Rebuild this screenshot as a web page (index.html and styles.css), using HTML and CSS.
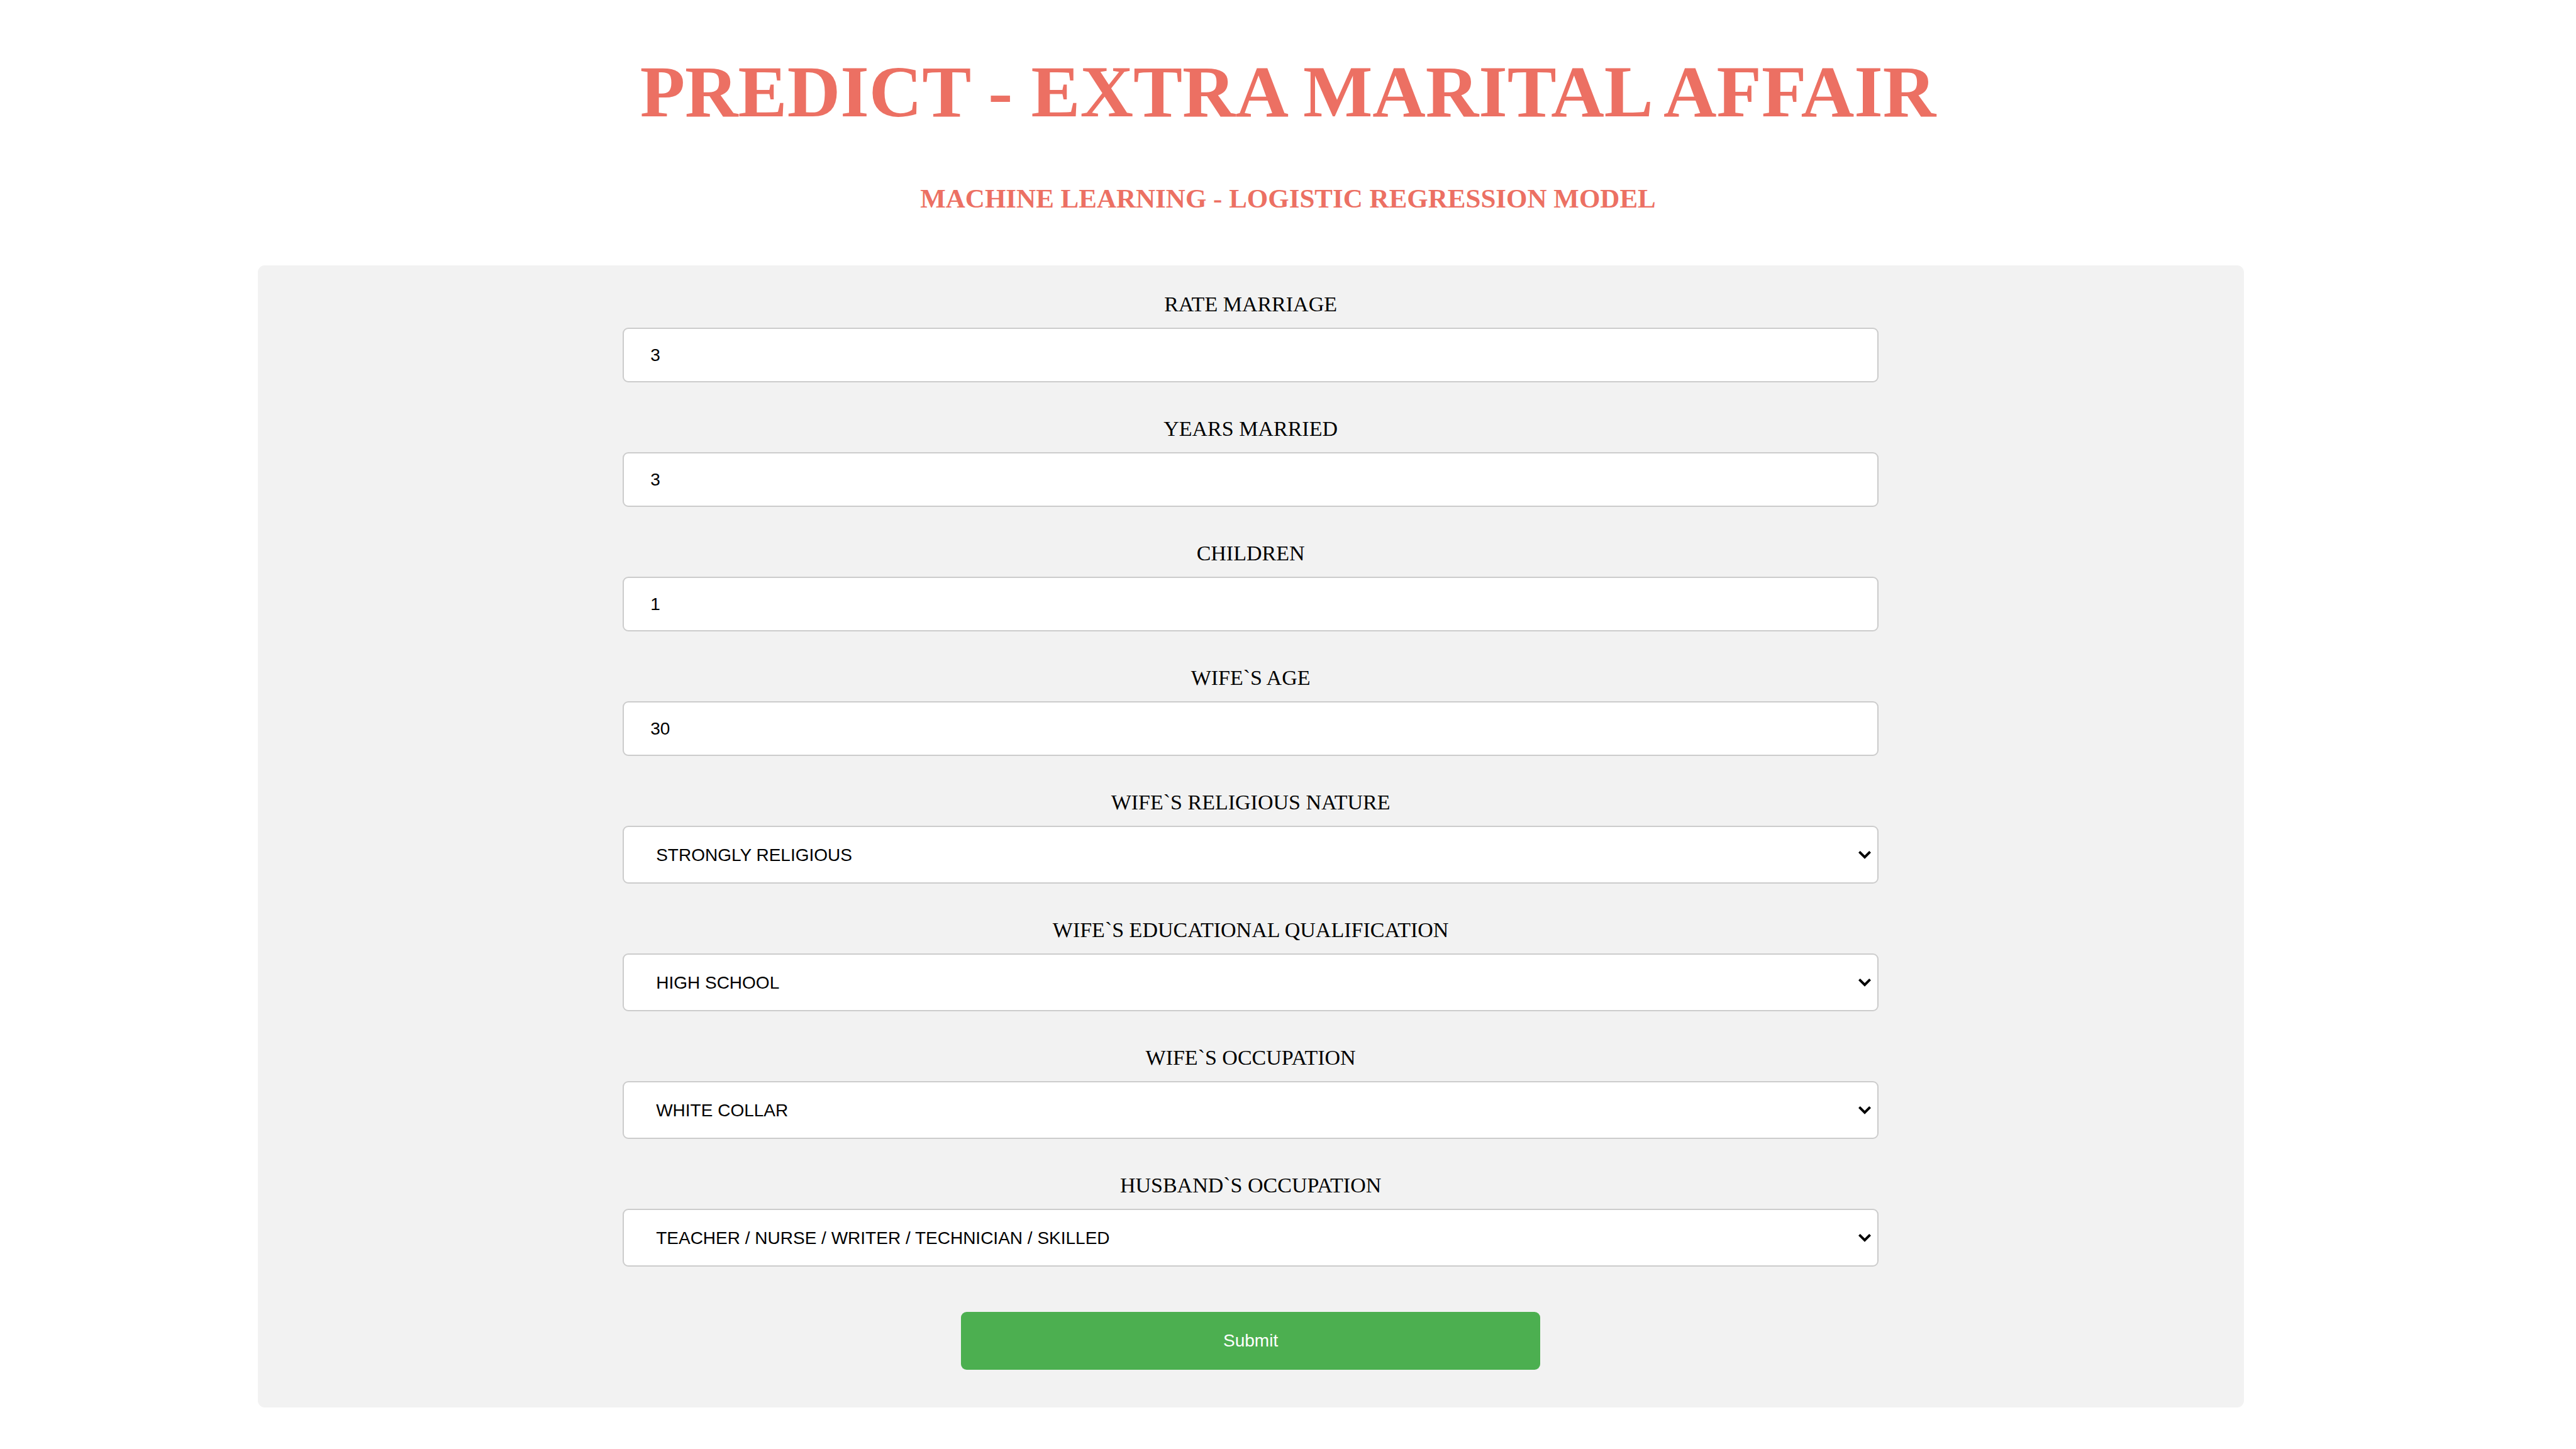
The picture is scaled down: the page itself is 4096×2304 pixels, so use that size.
FILE: index.html
```html
<!DOCTYPE html>
<html lang="en">
<head>
<meta charset="utf-8">
<title>Predict - Extra Marital Affair</title>
<link rel="stylesheet" href="styles.css">
</head>
<body>
<header class="header">
  <h1 class="title">PREDICT - EXTRA MARITAL AFFAIR</h1>
  <h2 class="subtitle">MACHINE LEARNING - LOGISTIC REGRESSION MODEL</h2>
</header>
<main>
  <form class="card">
    <div class="field">
      <label for="rate">RATE MARRIAGE</label>
      <input class="control" id="rate" name="rate" type="text" value="3">
    </div>
    <div class="field">
      <label for="years">YEARS MARRIED</label>
      <input class="control" id="years" name="years" type="text" value="3">
    </div>
    <div class="field">
      <label for="children">CHILDREN</label>
      <input class="control" id="children" name="children" type="text" value="1">
    </div>
    <div class="field">
      <label for="age">WIFE`S AGE</label>
      <input class="control" id="age" name="age" type="text" value="30">
    </div>
    <div class="field">
      <label for="religious">WIFE`S RELIGIOUS NATURE</label>
      <div class="picker">
        <select class="control" id="religious" name="religious"><option>STRONGLY RELIGIOUS</option></select>
        <svg class="chevron" viewBox="0 0 20 13" aria-hidden="true"><path d="M1.4 1.4 10 10l8.6-8.6"/></svg>
      </div>
    </div>
    <div class="field">
      <label for="education">WIFE`S EDUCATIONAL QUALIFICATION</label>
      <div class="picker">
        <select class="control" id="education" name="education"><option>HIGH SCHOOL</option></select>
        <svg class="chevron" viewBox="0 0 20 13" aria-hidden="true"><path d="M1.4 1.4 10 10l8.6-8.6"/></svg>
      </div>
    </div>
    <div class="field">
      <label for="wife-job">WIFE`S OCCUPATION</label>
      <div class="picker">
        <select class="control" id="wife-job" name="wife-job"><option>WHITE COLLAR</option></select>
        <svg class="chevron" viewBox="0 0 20 13" aria-hidden="true"><path d="M1.4 1.4 10 10l8.6-8.6"/></svg>
      </div>
    </div>
    <div class="field">
      <label for="husband-job">HUSBAND`S OCCUPATION</label>
      <div class="picker">
        <select class="control" id="husband-job" name="husband-job"><option>TEACHER / NURSE / WRITER / TECHNICIAN / SKILLED</option></select>
        <svg class="chevron" viewBox="0 0 20 13" aria-hidden="true"><path d="M1.4 1.4 10 10l8.6-8.6"/></svg>
      </div>
    </div>
    <button class="submit" type="submit">Submit</button>
  </form>
</main>
</body>
</html>
```
FILE: styles.css
```css
body {
  margin: 0;
  background: #fff;
  color: #000;
  font-family: "Liberation Serif", "Times New Roman", serif;
}

.header {
  padding: 80px 16px 82px;
  text-align: center;
  color: #ec7063;
}

.title {
  margin: 0 0 80px;
  font-size: 117px;
  line-height: 132px;
}

.subtitle {
  margin: 0;
  font-size: 43px;
  line-height: 48px;
}

.card {
  box-sizing: content-box;
  width: 75%;
  margin-left: 10%;
  padding: 43px 43px 60px;
  border-radius: 11px;
  background: #f2f2f2;
  display: flex;
  flex-direction: column;
  align-items: center;
  gap: 55px;
}

.field {
  width: 65%;
  display: flex;
  flex-direction: column;
  gap: 18px;
  text-align: center;
  font-size: 34px;
  line-height: 38px;
}

.control {
  box-sizing: border-box;
  width: 100%;
  height: 87px;
  margin: 0;
  padding: 0 42px;
  border: 2px solid #ccc;
  border-radius: 9px;
  background: #fff;
  color: #000;
  font-family: "Liberation Sans", Arial, sans-serif;
  font-size: 28px;
}

.picker {
  display: grid;
  align-items: center;
}

.picker .control,
.picker .chevron {
  grid-area: 1 / 1;
}

.picker .control {
  height: 92px;
  padding: 0 51px;
  appearance: none;
}

.chevron {
  justify-self: end;
  width: 20px;
  height: 13px;
  margin-right: 12px;
  fill: none;
  stroke: #000;
  stroke-width: 4;
  pointer-events: none;
}

.submit {
  width: 30%;
  height: 92px;
  margin: 17px 0 0;
  padding: 0;
  border: 0;
  border-radius: 9px;
  background: #4caf50;
  color: #fff;
  font-family: "Liberation Sans", Arial, sans-serif;
  font-size: 28px;
  cursor: pointer;
}
```
